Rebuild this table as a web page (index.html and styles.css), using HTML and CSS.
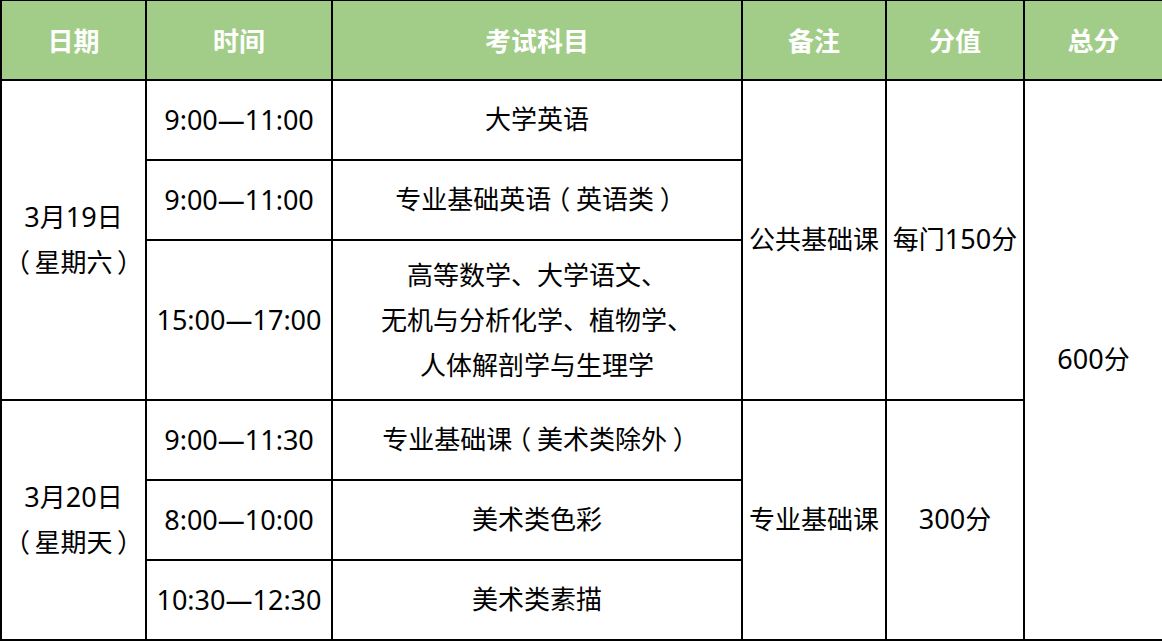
FILE: index.html
```html
<!DOCTYPE html>
<html lang="zh-CN">
<head>
<meta charset="utf-8">
<title>考试安排</title>
<link rel="stylesheet" href="styles.css">
</head>
<body>
<table class="schedule">
  <colgroup>
    <col class="c-date">
    <col class="c-time">
    <col class="c-subject">
    <col class="c-note">
    <col class="c-score">
    <col class="c-total">
  </colgroup>
  <thead>
    <tr class="head">
      <th>日期</th>
      <th>时间</th>
      <th>考试科目</th>
      <th>备注</th>
      <th>分值</th>
      <th>总分</th>
    </tr>
  </thead>
  <tbody>
    <tr class="r80">
      <td rowspan="3" class="multi"><span class="num">3</span>月<span class="num">19</span>日<br><span class="pd">（</span>星期六<span class="pd">）</span></td>
      <td class="time">9:00—11:00</td>
      <td>大学英语</td>
      <td rowspan="3">公共基础课</td>
      <td rowspan="3">每门<span class="num">150</span>分</td>
      <td rowspan="6"><span class="num">600</span>分</td>
    </tr>
    <tr class="r80">
      <td class="time">9:00—11:00</td>
      <td>专业基础英语<span class="p">（</span>英语类<span class="p">）</span></td>
    </tr>
    <tr class="r160">
      <td class="time">15:00—17:00</td>
      <td class="multi">高等数学、大学语文、<br>无机与分析化学、植物学、<br>人体解剖学与生理学</td>
    </tr>
    <tr class="r80">
      <td rowspan="3" class="multi"><span class="num">3</span>月<span class="num">20</span>日<br><span class="pd">（</span>星期天<span class="pd">）</span></td>
      <td class="time">9:00—11:30</td>
      <td>专业基础课<span class="p">（</span>美术类除外<span class="p">）</span></td>
      <td rowspan="3">专业基础课</td>
      <td rowspan="3"><span class="num">300</span>分</td>
    </tr>
    <tr class="r80">
      <td class="time">8:00—10:00</td>
      <td>美术类色彩</td>
    </tr>
    <tr class="r80">
      <td class="time">10:30—12:30</td>
      <td>美术类素描</td>
    </tr>
  </tbody>
</table>
</body>
</html>
```

FILE: styles.css
```css
html, body {
  margin: 0;
  padding: 0;
  background: #ffffff;
}
body {
  font-family: "Noto Sans", "Noto Sans CJK SC", sans-serif;
  color: #000000;
}
.schedule {
  width: 1162px;
  table-layout: fixed;
  border-collapse: collapse;
}
.c-date { width: 145px; }
.c-time { width: 186px; }
.c-subject { width: 410px; }
.c-note { width: 144px; }
.c-score { width: 138px; }
.c-total { width: 139px; }
.schedule th,
.schedule td {
  border: 2px solid #000000;
  padding: 0;
  text-align: center;
  vertical-align: middle;
  font-size: 26px;
  line-height: 1.2;
  font-weight: 400;
}
.schedule .head th {
  height: 78px;
  border-top-width: 1px;
  background: #a2cd88;
  color: #ffffff;
  font-weight: 700;
  font-size: 26px;
  font-family: "Noto Sans CJK SC", sans-serif;
}
.r80 { height: 80px; }
.r160 { height: 160px; }
.schedule td.time {
  font-size: 27px;
}
.num {
  font-size: 27px;
  line-height: 1;
}
.schedule td.multi {
  line-height: 45px;
}
.p,
.pd {
  display: inline-block;
  text-align: center;
  font-feature-settings: "halt" 1;
}
.p { width: 0.95em; }
.pd { width: 0.85em; }
```
